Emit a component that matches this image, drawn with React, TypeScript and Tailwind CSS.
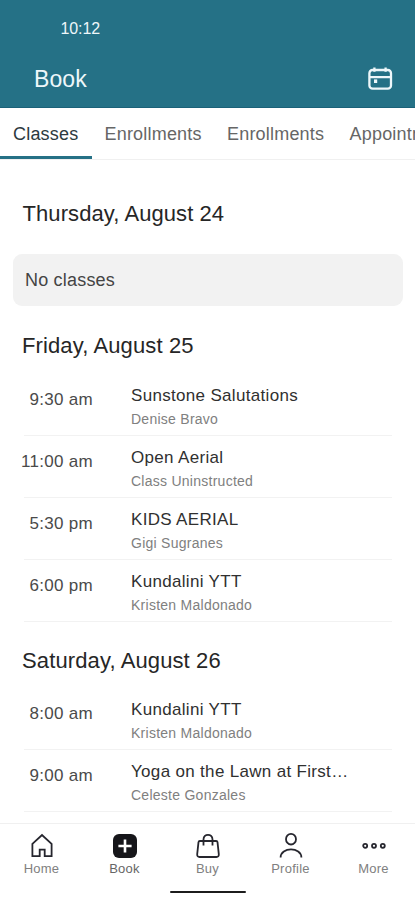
import type { ReactNode } from "react";

type Session = { time: string; title: string; teacher: string };

const friday: Session[] = [
  { time: "9:30 am", title: "Sunstone Salutations", teacher: "Denise Bravo" },
  { time: "11:00 am", title: "Open Aerial", teacher: "Class Uninstructed" },
  { time: "5:30 pm", title: "KIDS AERIAL", teacher: "Gigi Sugranes" },
  { time: "6:00 pm", title: "Kundalini YTT", teacher: "Kristen Maldonado" },
];

const saturday: Session[] = [
  { time: "8:00 am", title: "Kundalini YTT", teacher: "Kristen Maldonado" },
  { time: "9:00 am", title: "Yoga on the Lawn at First…", teacher: "Celeste Gonzales" },
];

function SessionRow({ time, title, teacher }: Session) {
  return (
    <li className="flex h-[62px]">
      <div className="w-[93px] shrink-0 pt-[14px] text-right text-[17px] leading-6 tracking-[0.3px] text-[#4a4a4a]">
        {time}
      </div>
      <div className="relative ml-[38px] flex-1 pt-[10px]">
        <div className="text-[17px] leading-6 tracking-[0.32px] text-[#303030]">{title}</div>
        <div className="mt-px text-sm leading-5 tracking-[0.26px] text-[#808080]">{teacher}</div>
        <div className="absolute right-[23px] bottom-0 -left-[107px] h-px bg-[#f2f2f2]" />
      </div>
    </li>
  );
}

function NavItem({ label, active, children }: { label: string; active?: boolean; children: ReactNode }) {
  return (
    <button className="flex flex-1 flex-col items-center pt-[7px]">
      <svg width="30" height="30" viewBox="0 0 30 30" fill="none" stroke="#26262e" strokeWidth="1.8">
        {children}
      </svg>
      <span
        className={
          active
            ? "text-[13px] leading-4 tracking-[0.25px] text-[#666666]"
            : "text-[13px] leading-4 tracking-[0.25px] text-[#808080]"
        }
      >
        {label}
      </span>
    </button>
  );
}

export default function App() {
  return (
    <div className="flex h-[900px] w-[415px] flex-col overflow-hidden bg-white font-['Liberation_Sans',Arial,sans-serif]">
      <header className="h-[108px] shrink-0 border-b border-[#1b6178] bg-[#257186] text-[#eef7fa]">
        <div className="pt-[19px] pl-[60.5px] text-base leading-5 tracking-[-0.1px]">10:12</div>
        <div className="mt-6 flex h-8 items-center justify-between pr-[22px] pl-[34px]">
          <h1 className="text-[23px] leading-8 tracking-[0.1px]">Book</h1>
          <svg width="26" height="26" viewBox="0 0 26 26" fill="none" stroke="currentColor" strokeWidth="2.3">
            <rect x="2.4" y="4" width="21.6" height="18.6" rx="3.2" />
            <path d="M2.4 11.2h21.600M7.4 1.400v4.400M18.6 1.400v4.400" />
            <rect x="7" y="13.4" width="3.200" height="3.600" fill="currentColor" stroke="none" />
          </svg>
        </div>
      </header>

      <nav className="flex h-[52px] shrink-0 overflow-hidden border-b border-[#f0f0f0] text-lg tracking-[0.2px] whitespace-nowrap text-[#666666]">
        <div className="relative w-[91.5px] shrink-0 pl-[13px] leading-[52px] text-[#2c3a40]">
          Classes
          <div className="absolute bottom-0 left-0 h-[3px] w-[91.5px] bg-[#257186]" />
        </div>
        <div className="w-[122.5px] shrink-0 pl-[13px] leading-[52px]">Enrollments</div>
        <div className="w-[122.5px] shrink-0 pl-[13px] leading-[52px]">Enrollments</div>
        <div className="shrink-0 pl-[13px] leading-[52px]">Appointments</div>
      </nav>

      <main className="flex-1 overflow-hidden">
        <h2 className="mt-[42px] ml-[22.5px] text-[22px] leading-6 tracking-[0.08px] text-[#262626]">
          Thursday, August 24
        </h2>
        <div className="mt-7 mr-3 ml-[13px] h-[52px] rounded-[9px] bg-[#f2f2f2] pl-3 text-lg leading-[52px] tracking-[0.2px] text-[#444444]">
          No classes
        </div>
        <h2 className="mt-7 mb-4 ml-[22px] text-[22px] leading-6 tracking-[0.12px] text-[#262626]">
          Friday, August 25
        </h2>
        <ul>
          {friday.map((s) => (
            <SessionRow key={s.time} {...s} />
          ))}
        </ul>
        <h2 className="mt-[27px] mb-[15px] ml-[22px] text-[22px] leading-6 tracking-[0.12px] text-[#262626]">
          Saturday, August 26
        </h2>
        <ul>
          {saturday.map((s) => (
            <SessionRow key={s.time} {...s} />
          ))}
        </ul>
      </main>

      <footer className="flex h-[77px] shrink-0 flex-col border-t border-[#f0f0f0] bg-white">
        <div className="flex h-[67px]">
          <NavItem label="Home">
            <path d="M5.4 12.800 15 4l9.600 8.800V25.200h-6.900v-6.600h-5v6.600H5.4z" />
          </NavItem>
          <NavItem label="Book" active>
            <rect x="3" y="3" width="24" height="24" rx="6" fill="#16161a" stroke="none" />
            <path d="M15 8.4v13.2M8.4 15h13.2" stroke="#ffffff" strokeWidth="2.6" />
          </NavItem>
          <NavItem label="Buy">
            <path d="M6.900 10h16.200c.8 0 1.300.4 1.400 1.200l1.300 12c.2 1.600-.7 2.800-2.300 2.800h-17c-1.600 0-2.500-1.200-2.300-2.800l1.300-12c.1-.8.600-1.200 1.400-1.200z" />
            <path d="M10.500 14.500V8.500c0-6.300 9-6.300 9 0v6" />
          </NavItem>
          <NavItem label="Profile">
            <ellipse cx="15" cy="8.200" rx="5" ry="5.300" />
            <path d="M4.600 26.500c0-10.800 20.800-10.800 20.800 0" />
          </NavItem>
          <NavItem label="More">
            <circle cx="6.200" cy="14.800" r="2" />
            <circle cx="15" cy="14.800" r="2" />
            <circle cx="23.800" cy="14.800" r="2" />
          </NavItem>
        </div>
        <div className="ml-[170px] h-0.5 w-[76px] rounded-full bg-[#1c1c1c]" />
      </footer>
    </div>
  );
}
